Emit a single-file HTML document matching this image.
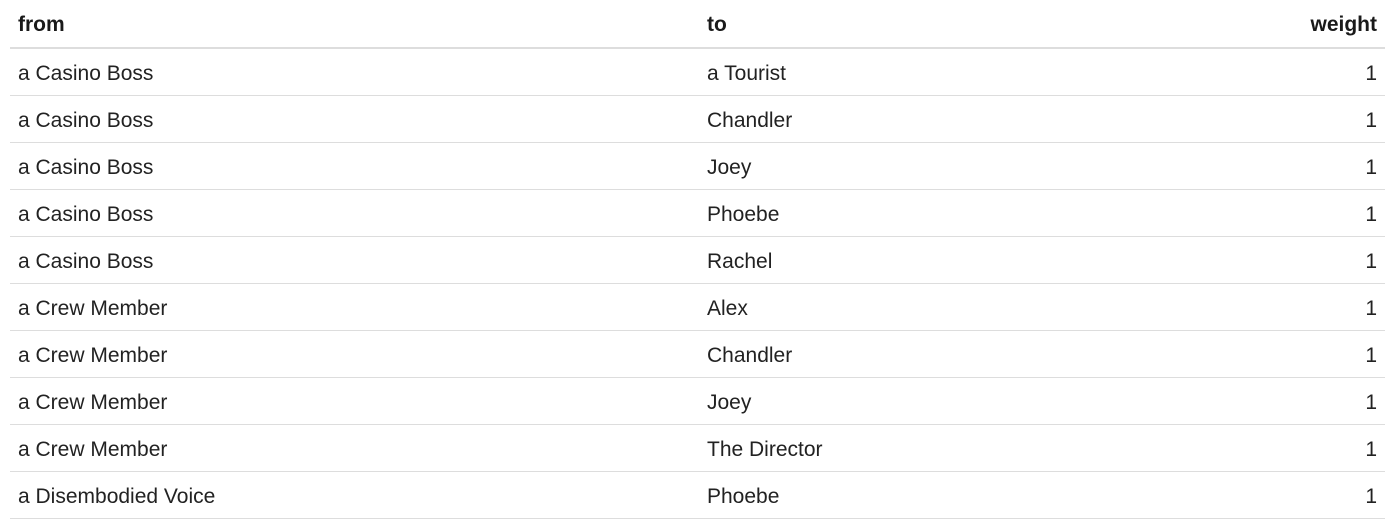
<!DOCTYPE html>
<html><head><meta charset="utf-8"><style>
html,body{margin:0;padding:0;background:#fff;}
body{width:1400px;height:532px;overflow:hidden;font-family:"Liberation Sans",Helvetica,Arial,sans-serif;color:#222;}
table{position:absolute;left:10px;top:0;width:1375px;border-collapse:collapse;font-size:21px;table-layout:fixed;}
th,td{padding:3px 8px 0 8px;text-align:left;white-space:nowrap;}
th{font-weight:bold;height:44px;border-bottom:2.5px solid #ddd;color:#1a1a1a;}
td{height:43px;border-bottom:1px solid #ddd;}
.r{text-align:right;}
</style></head><body>
<table>
<colgroup><col style="width:689px"><col style="width:600px"><col style="width:86px"></colgroup>
<tr><th>from</th><th>to</th><th class="r">weight</th></tr>
<tr><td>a Casino Boss</td><td>a Tourist</td><td class="r">1</td></tr>
<tr><td>a Casino Boss</td><td>Chandler</td><td class="r">1</td></tr>
<tr><td>a Casino Boss</td><td>Joey</td><td class="r">1</td></tr>
<tr><td>a Casino Boss</td><td>Phoebe</td><td class="r">1</td></tr>
<tr><td>a Casino Boss</td><td>Rachel</td><td class="r">1</td></tr>
<tr><td>a Crew Member</td><td>Alex</td><td class="r">1</td></tr>
<tr><td>a Crew Member</td><td>Chandler</td><td class="r">1</td></tr>
<tr><td>a Crew Member</td><td>Joey</td><td class="r">1</td></tr>
<tr><td>a Crew Member</td><td>The Director</td><td class="r">1</td></tr>
<tr><td>a Disembodied Voice</td><td>Phoebe</td><td class="r">1</td></tr>
</table>
</body></html>
